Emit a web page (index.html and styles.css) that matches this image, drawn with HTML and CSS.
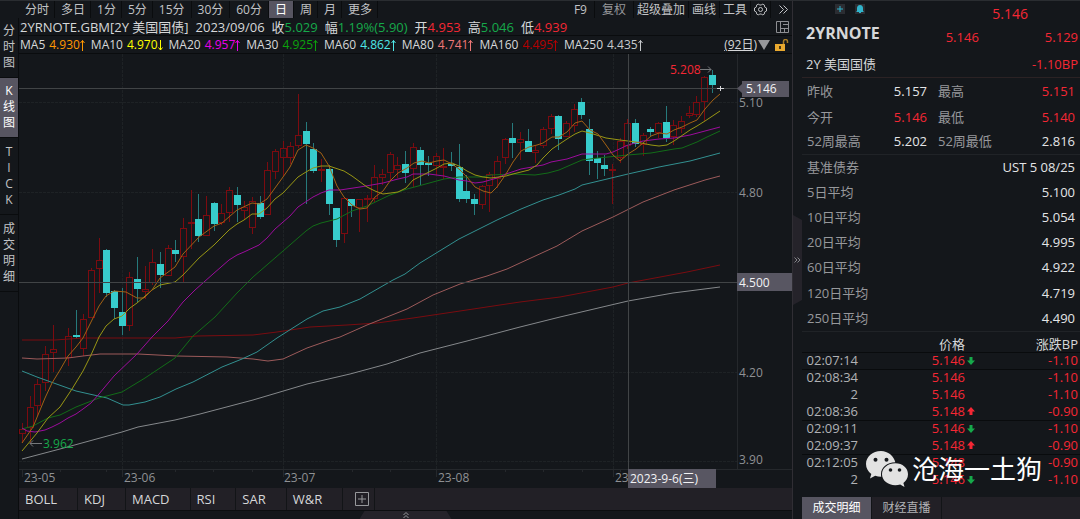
FILE: index.html
```html
<!DOCTYPE html>
<html lang="zh-CN">
<head>
<meta charset="utf-8">
<title>2YRNOTE.GBM</title>
<link rel="stylesheet" href="styles.css">
</head>
<body>
<svg class="defs" aria-hidden="true">
  <symbol id="up" viewBox="0 0 5 12"><path d="M2.5 12V1.5M0.5 4L2.5 1.5L4.5 4" fill="none" stroke="currentColor"/></symbol>
  <symbol id="down" viewBox="0 0 5 12"><path d="M2.5 1V11M0.5 8.500L2.5 11L4.5 8.500" fill="none" stroke="currentColor"/></symbol>
  <symbol id="tick-down" viewBox="0 0 8 8"><path d="M2.500 0H5.500V3.500H8L4 8L0 3.500H2.500Z" fill="currentColor"/></symbol>
  <symbol id="tick-up" viewBox="0 0 8 8"><path d="M2.500 8H5.500V4.500H8L4 0L0 4.500H2.500Z" fill="currentColor"/></symbol>
</svg>
<div class="app">
  <section class="terminal">
    <nav class="toolbar">
      <div class="periods">
        <button>分时</button><button>多日</button><button>1分</button><button>5分</button><button class="wide">15分</button><button class="wide">30分</button><button class="wide">60分</button><button class="wide on">日</button><button>周</button><button>月</button><button>更多</button>
      </div>
      <div class="tools">
        <button class="roomy">F9</button><button class="roomy muted">复权</button><button>超级叠加</button><button>画线</button><button>工具</button>
        <button aria-label="设置"><svg width="13" height="13" viewBox="0 0 13 13" fill="none" stroke="currentColor"><path d="M4.500 1L5.500 2H7.500L8.500 1L10.500 2.200V3.800L12.500 5V8L10.500 9.200V10.800L8.500 12L7.500 11H5.500L4.500 12L2.500 10.800V9.200L0.500 8V5L2.500 3.800V2.200Z"/><circle cx="6.500" cy="6.500" r="2"/></svg></button>
        <button class="more" aria-label="展开"><svg width="9" height="9" viewBox="0 0 9 9" fill="none" stroke="currentColor"><path d="M0.500 0.500L4.500 4.500L0.500 8.500M4.500 0.500L8.500 4.500L4.500 8.500"/></svg></button>
      </div>
    </nav>
    <nav class="views">
      <button><span>分</span><span>时</span><span>图</span></button>
      <button class="on"><span>K</span><span>线</span><span>图</span></button>
      <button class="tall"><span>T</span><span>I</span><span>C</span><span>K</span></button>
      <button class="tall"><span>成</span><span>交</span><span>明</span><span>细</span></button>
    </nav>
    <main class="main">
      <div class="quote">
        <span>2YRNOTE.GBM[2Y 美国国债]</span>
        <span>2023/09/06</span>
        <span>收<b class="green">5.029</b></span>
        <span>幅<b class="green">1.19%(5.90)</b></span>
        <span>开<b class="red">4.953</b></span>
        <span>高<b class="green">5.046</b></span>
        <span>低<b class="red">4.939</b></span>
        <svg class="end" width="13" height="12" viewBox="0 0 13 12" fill="none" stroke="#8d8e92"><path d="M0.500 0.500H12.500V11.500H0.500ZM4.500 0.500V11.500M4.500 7.500H12.500M7 3.500H12.500M8.500 7.500V11.500"/></svg>
      </div>
      <div class="averages">
        <span>MA5 <b class="ma5">4.930<svg><use href="#up"/></svg></b></span>
        <span>MA10 <b class="ma10">4.970<svg><use href="#down"/></svg></b></span>
        <span>MA20 <b class="ma20">4.957<svg><use href="#up"/></svg></b></span>
        <span>MA30 <b class="ma30">4.925<svg><use href="#up"/></svg></b></span>
        <span>MA60 <b class="ma60">4.862<svg><use href="#up"/></svg></b></span>
        <span>MA80 <b class="ma80">4.741<svg><use href="#up"/></svg></b></span>
        <span>MA160 <b class="ma160">4.495<svg><use href="#up"/></svg></b></span>
        <span>MA250 <b class="ma250">4.435<svg><use href="#up"/></svg></b></span>
        <div class="range">
          <a href="#range">(92日)</a>
          <svg width="12" height="10" viewBox="0 0 12 10"><path d="M0 0H12L6 10Z" fill="#97989b"/></svg>
          <svg class="lock" width="14" height="12" viewBox="0 0 14 12"><path d="M8.500 5V2.500A2 2 0 0 1 12.500 2.500V4" fill="none" stroke="#a87c25" stroke-width="1.500"/><rect y="5" width="10" height="7" fill="#e9a92f"/><path d="M4 7H6V10H4Z" fill="#4a3610"/></svg>
        </div>
      </div>
      <svg class="chart" viewBox="19 54 773 434" preserveAspectRatio="xMinYMin meet" role="img" aria-label="日K线图">
        <g class="grid">
          <path d="M19 102.500H737M19 192.500H737M19 372.500H737M19 461.500H737M122.500 54V469M283.500 54V469M436.500 54V469M613.500 54V469"/>
        </g>
        <path class="frame" d="M737.500 54V469M19 469.500H792M22.500 469V477M60.500 469V472M106.500 469V472M175.500 469V472M213.500 469V472M252.500 469V472M313.500 469V472M352.500 469V472M390.500 469V472M467.500 469V472M505.500 469V472M543.500 469V472M582.500 469V472M122.500 469V477M283.500 469V477M436.500 469V477M613.500 469V477M620.500 469V472"/>
        <g id="candles"></g>
        <g id="lines" fill="none"></g>
        <path class="cross" d="M19 88.500H740M19 282.500H737M628.500 54V469"/>
        <path class="last" d="M717 88.500H724M720.500 86V91"/>
        <path class="pointer" d="M30 443.500H42M33 440.500L30 443.500L33 446.500M700 69.500H711M708 66.500L711 69.500L708 72.500"/>
        <text class="green" x="43" y="448">3.962</text>
        <text class="red" x="670" y="74">5.208</text>
        <g class="axis">
          <text x="739" y="107">5.10</text><text x="739" y="197">4.80</text><text x="739" y="377">4.20</text><text x="739" y="464">3.90</text>
          <text x="24" y="482">23-05</text><text x="124" y="482">23-06</text><text x="284" y="482">23-07</text><text x="438" y="482">23-08</text><text x="615" y="482">23</text>
        </g>
        <g class="tag">
          <path d="M737 88.500L742 84V81H789V97H742V93Z"/><rect x="737" y="273" width="55" height="18"/><rect x="628" y="469" width="88" height="19"/>
          <text x="746" y="93">5.146</text><text x="739" y="287">4.500</text><text x="630" y="483">2023-9-6(三)</text>
        </g>
      </svg>
      <nav class="indicators">
        <button>BOLL</button><button>KDJ</button><button>MACD</button><button>RSI</button><button>SAR</button><button>W&amp;R</button>
        <button class="add" aria-label="添加指标"><svg width="14" height="14" viewBox="0 0 14 14" fill="none" stroke="currentColor"><path d="M0.500 0.500H13.500V13.500H0.500ZM7 3V11M3 7H11"/></svg></button>
      </nav>
      <div class="drawer"><button aria-label="展开面板"><svg width="6" height="6" viewBox="0 0 6 6" fill="none" stroke="currentColor"><path d="M0.500 3L3 0.500L5.500 3M0.500 6L3 3.500L5.500 6"/></svg></button></div>
    </main>
  </section>
  <aside class="side">
    <button class="handle" aria-label="收起"><svg width="7" height="6" viewBox="0 0 7 6" fill="none" stroke="currentColor"><path d="M0.500 0.500L3 3L0.500 5.500M3.500 0.500L6 3L3.500 5.500"/></svg></button>
    <div class="panel">
      <header class="head">
        <div class="top">
          <button aria-label="添加自选"><svg width="10" height="10" viewBox="0 0 10 10"><path d="M5 2V8M2 5H8" stroke="#30b4cc"/></svg></button>
          <button aria-label="提醒"><svg width="10" height="10" viewBox="0 0 10 10"><path d="M5 1C7 1 8 2.500 8 4V7L9 8H1L2 7V4C2 2.500 3 1 5 1ZM4 8H6V9H4Z" fill="#30b4cc"/></svg></button>
          <span class="red">5.146</span>
        </div>
        <div class="name"><strong>2YRNOTE</strong><span class="red bid">5.146</span><span class="red">5.129</span></div>
        <div class="name"><span>2Y 美国国债</span><span class="red change">-1.10BP</span></div>
      </header>
      <table class="stats pair">
        <tr><th>昨收</th><td>5.157</td><th>最高</th><td class="red">5.151</td></tr>
        <tr><th>今开</th><td class="red">5.146</td><th>最低</th><td class="red">5.140</td></tr>
        <tr><th>52周最高</th><td>5.202</td><th>52周最低</th><td>2.816</td></tr>
      </table>
      <table class="stats single">
        <tr><th>基准债券</th><td>UST 5 08/25</td></tr>
        <tr><th>5日平均</th><td>5.100</td></tr>
        <tr><th>10日平均</th><td>5.054</td></tr>
        <tr><th>20日平均</th><td>4.995</td></tr>
        <tr><th>60日平均</th><td>4.922</td></tr>
        <tr><th>120日平均</th><td>4.719</td></tr>
        <tr><th>250日平均</th><td>4.490</td></tr>
      </table>
      <div class="deals">
        <table>
          <thead><tr><th></th><th>价格</th><th></th><th>涨跌BP</th></tr></thead>
          <tbody>
            <tr class="rule"><td>02:07:14</td><td>5.146</td><td class="green"><svg><use href="#tick-down"/></svg></td><td>-1.10</td></tr>
            <tr><td>02:08:34</td><td>5.146</td><td></td><td>-1.10</td></tr>
            <tr><td>2</td><td>5.146</td><td></td><td>-1.10</td></tr>
            <tr class="rule"><td>02:08:36</td><td>5.148</td><td class="red"><svg><use href="#tick-up"/></svg></td><td>-0.90</td></tr>
            <tr><td>02:09:11</td><td>5.146</td><td class="green"><svg><use href="#tick-down"/></svg></td><td>-1.10</td></tr>
            <tr class="rule"><td>02:09:37</td><td>5.148</td><td class="red"><svg><use href="#tick-up"/></svg></td><td>-0.90</td></tr>
            <tr><td>02:12:05</td><td>5.148</td><td></td><td>-0.90</td></tr>
            <tr><td>2</td><td>5.146</td><td class="green"><svg><use href="#tick-down"/></svg></td><td>-1.10</td></tr>
          </tbody>
        </table>
        <div class="mark">
          <svg width="42" height="36" viewBox="0 0 42 36"><path fill="#e2e2e2" d="M15 0C6.500 0 0 5.800 0 13C0 17 2 20.500 5.300 23L4 27.500L9.200 24.800C11 25.400 13 25.700 15.200 25.700A11 10 0 0 1 15 23C15 16.500 21 11.300 29.300 11.300C28 5 22 0 15 0Z"/><path fill="#e2e2e2" d="M29.300 12.300C22 12.300 16 17 16 23.300C16 29.500 22 34.200 29.300 34.200C31 34.200 32.700 34 34.200 33.500L38.500 36L37.400 32C40 30 42 27 42 23.300C42 17 36.500 12.300 29.300 12.300Z"/><g fill="#14171b"><circle cx="9.500" cy="8.800" r="2"/><circle cx="20.500" cy="8.800" r="2"/><circle cx="24.500" cy="19" r="1.800"/><circle cx="33.500" cy="19" r="1.800"/></g></svg>
          <span>沧海一土狗</span>
        </div>
      </div>
      <nav class="tabs"><button class="on">成交明细</button><button>财经直播</button></nav>
    </div>
  </aside>
</div>
<script src="chart.js"></script>
</body>
</html>
```
FILE: styles.css
```css
* { box-sizing: border-box; }
body {
  margin: 0;
  background: #14171b;
  color: #d6d7d9;
  font: 12px/16px "Open Sans", "Noto Sans CJK SC", sans-serif;
  overflow: hidden;
}
button {
  margin: 0;
  padding: 0;
  border: 0;
  background: none;
  color: inherit;
  font: inherit;
  white-space: nowrap;
}
svg { display: block; }
b { font-weight: 400; }
.defs { position: absolute; width: 0; height: 0; }

.red { color: #f52734; fill: #f52734; }
.green { color: #16a94a; fill: #16a94a; }

.app {
  display: grid;
  grid-template-columns: minmax(0, 1fr) 287px;
  height: 100vh;
  border-top: 1px solid #2a2d31;
}
.terminal {
  display: grid;
  grid-template: 17px minmax(0, 1fr) / 19px minmax(0, 1fr);
  border-right: 1px solid #302e34;
}

.toolbar {
  grid-column: 1 / 3;
  display: flex;
  justify-content: space-between;
  padding-left: 19px;
  color: #c2c3c6;
}
.periods, .tools { display: flex; }
.toolbar button {
  padding: 0 5px 0 6px;
  line-height: 17px;
  border-right: 1px solid #0a0c0e;
}
.toolbar .wide { padding: 0 6px; }
.toolbar .on { background: #575561; color: #fff; }
.toolbar .tools button { padding: 0 3px; }
.toolbar .tools .roomy { padding: 0 7px; }
.toolbar .tools .more { padding: 0 4px 0 8px; border: 0; }
.toolbar .muted { color: #97989b; }

.views { border-right: 1px solid #0a0c0e; color: #c2c3c6; padding-top: 4px; }
.views button {
  display: flex;
  flex-direction: column;
  align-items: center;
  width: 100%;
  padding: 1px 0 6px;
  border-bottom: 1px solid #0a0c0e;
}
.views .on { padding: 5px 0 6px; background: #575561; color: #fff; }
.views .tall { padding: 6px 0; }

.main { display: flex; flex-direction: column; min-width: 0; }
.quote, .averages {
  display: flex;
  align-items: center;
  height: 18px;
  padding: 0 3px 0 1px;
  border-bottom: 1px solid #0a0c0e;
  white-space: nowrap;
}
.quote { gap: 7px; font-size: 13px; }
.end { margin-left: auto; }
.averages { gap: 6px; }
.averages span { display: flex; gap: 4px; }
.averages b { display: flex; align-items: center; }
.averages b svg { width: 5px; height: 12px; }
.ma5 { color: #ff9800; }
.ma10 { color: #ffff00; }
.ma20 { color: #ea00ea; }
.ma30 { color: #0ba30b; }
.ma60 { color: #4fe8e8; }
.ma80 { color: #f07878; }
.ma160 { color: #b50000; }
.ma250 { color: #c6c9cc; }
.range { display: flex; align-items: center; gap: 1px; margin-left: auto; }
.range a { color: inherit; }
.lock { margin-left: 4px; }

.chart { flex: 1; width: 100%; min-height: 0; }
.chart text { font-size: 12px; }
.chart path { stroke-width: 1; }
.grid path { stroke: #1e2225; stroke-dasharray: 3 1; }
.frame { stroke: #25282c; fill: none; }
.cross { stroke: #414446; }
.last { stroke: #d6d7d9; }
.pointer { stroke: #75787b; fill: none; }
.axis text { fill: #8f9194; }
.tag path, .tag rect { fill: #585662; }
.tag text { fill: #f2f2f4; }

.indicators { display: flex; height: 22px; background: #222026; }
.indicators button { padding: 0 20px 0 6px; border-right: 1px solid #121417; font-size: 13px; }
.indicators .add { padding: 0 5px 0 12px; color: #97989b; }
.drawer { display: flex; justify-content: center; height: 9px; border-top: 1px solid #0c0e10; }
.drawer button {
  display: flex;
  justify-content: center;
  align-items: center;
  width: 92px;
  background: #25232a;
  color: #97989b;
  clip-path: polygon(5px 0, 87px 0, 100% 100%, 0 100%);
}

.side { display: grid; grid-template-columns: 9px minmax(0, 1fr); font-size: 13px; }
.handle {
  align-self: center;
  display: flex;
  justify-content: center;
  align-items: center;
  height: 90px;
  background: #25232a;
  color: #85868a;
  clip-path: polygon(0 0, 100% 5px, 100% 85px, 0 100%);
}
.panel { display: flex; flex-direction: column; min-width: 0; }
.head { height: 77px; padding: 1px 2px 0 4px; border-bottom: 1px solid #2b2224; }
.top { display: flex; align-items: flex-start; gap: 10px; padding-left: 29px; height: 21px; }
.top button { margin-top: 2px; background: #2b2d32; }
.top .red { margin: 3px 50px 0 auto; font-size: 14px; line-height: 18px; }
.name { display: flex; align-items: center; height: 28px; }
.name strong { flex: 1; padding-bottom: 8px; font-size: 16px; }
.name .bid { margin-right: 66px; }
.change { margin-left: auto; }
.name:last-child { height: 26px; }

table { border-collapse: collapse; width: 100%; }
th, td { padding: 0; font-weight: 400; white-space: nowrap; }
.stats { border-bottom: 1px solid #202327; }
.stats tr { height: 25px; }
.pair tr:first-child, .single tr:nth-child(n+6) { height: 26px; }
.stats th { padding-left: 5px; color: #97989b; text-align: left; font-size: 13px; }
.stats td { padding-right: 5px; text-align: right; color: #e4e5e7; }
.pair th:first-child { width: 72px; }
.pair td:nth-child(2) { width: 53px; padding: 0; }
.pair th:nth-child(3) { padding-left: 11px; }
.stats td.red { color: #f52734; }

.deals { position: relative; flex: 1; }
.deals thead tr { height: 20px; }
.deals thead th { vertical-align: bottom; }
.deals tbody tr { height: 17px; }
.deals th, .deals td { text-align: right; line-height: 15px; }
.deals td { color: #f52734; }
.deals td:first-child { color: #b1b2b5; }
.deals th:nth-child(1) { width: 56px; }
.deals th:nth-child(2) { width: 107px; }
.deals th:nth-child(3) { width: 13px; }
.deals th:last-child, .deals td:last-child { padding-right: 2px; }
.deals .rule, .deals thead tr { border-bottom: 1px solid #090b0d; }
.deals td.green { color: #16a94a; }
.deals td svg { width: 8px; height: 8px; margin-left: 2px; }
.mark {
  position: absolute;
  left: 64px;
  bottom: 8px;
  display: flex;
  align-items: center;
  gap: 4px;
  color: #fff;
  font-size: 26px;
  line-height: 40px;
  white-space: nowrap;
}
.tabs { display: flex; height: 22px; background: #222026; }
.tabs button { width: 70px; font-size: 12px; border-right: 1px solid #121417; color: #b1b2b5; }
.tabs .on { background: #575561; color: #fff; }
```
FILE: chart.js
```js
// One row per session: direction (r = up, t = down), high, body top, body bottom, low.
const candles = `
r 423 429 434 443|r 396 407 428 443|r 379 384 406 416|r 346 354 383 391|r 325 349 353 372||r 328 336 358 366|t 310 335 336 339|r 314 319 349 356|r 268 270 318 318
r 238 260 269 293|t 249 250 293 297|t 290 291 308 319|t 288 312 326 335|r 272 277 326 331|t 257 279 289 302|r 266 289 292 299|r 249 262 283 285|t 252 264 275 288|r 245 248 276 276
t 240 250 254 262|r 218 228 257 282|r 190 222 224 249|t 194 219 236 242|r 196 215 236 236|t 202 203 224 231|r 204 213 223 225|r 187 190 213 222|t 187 195 205 222|r 201 207 211 220
r 197 201 228 234|t 196 203 217 219|r 162 170 215 215|r 149 151 172 179|r 141 148 158 176|r 142 146 158 164|r 94 135 146 148|t 122 131 144 204|t 143 149 171 173|r 159 169 170 182
t 165 169 204 215|t 208 208 240 247|r 198 198 234 243|t 199 199 206 217|r 199 199 208 232|r 195 198 199 222|r 165 177 199 202|r 169 174 178 185|r 152 154 173 180|r 157 165 170 178
t 151 164 173 183|r 143 147 169 187|t 147 150 165 185|t 156 163 165 176|r 153 156 166 175|r 148 166 168 179|t 152 164 166 171|t 144 167 199 202|t 175 191 199 203|t 194 199 204 215
r 185 186 205 209|r 172 174 186 212|r 156 161 179 188|r 138 139 158 164|t 123 138 143 158|r 132 139 143 160|t 129 141 152 152|r 146 150 153 163|r 127 129 146 148|r 114 116 129 134
t 115 116 139 150|r 121 123 137 137|r 104 109 126 132|t 98 102 115 119|t 119 129 161 175|t 151 158 163 179|t 155 165 169 176|r 164 169 171 204|r 138 141 158 163|r 119 123 146 149
t 119 123 144 147|r 133 135 145 156|t 127 129 132 136|r 122 123 133 138|t 106 122 138 142|r 120 125 137 145|r 116 121 129 133|r 106 113 116 118|r 96 102 115 117|r 76 77 102 121
t 70 75 85 93`.trim().split(/[|\n]/);

const lines = [
  ['#7a0c10', '22,340 55,340 83,338 175,338 197,336 253,335 277,332 310,327 347,325 377,323 413,318 460,311 520,302 560,297 613,287 628,283 687,272 720,265'],
  ['#85888b', '22,459 60,449 122,432 138,427 175,420 200,414 253,400 307,384 350,374 387,364 420,353 467,341 520,327 560,317 628,301 673,293 720,287'],
  ['#9c5a5a', '22,358 37,359 68,358 83,356 100,354 138,354 177,356 227,357 253,359 268,361 283,359 307,348 327,341 340,337 367,325 387,317 407,309 433,295 460,284 487,276 507,269 520,263 557,246 582,231 613,217 643,202 674,190 705,180 720,176'],
  ['#329090', '22,371 37,377 76,391 107,398 123,405 129,405 145,402 160,397 176,389 193,382 222,367 242,359 257,352 277,338 307,319 323,311 340,307 360,299 393,280 405,274 420,263 459,239 497,220 521,209 543,200 559,195 575,189 582,185 628,174 659,167 690,161 720,153'],
  ['#126c18', '22,429 33,426 48,418 60,415 76,407 99,398 122,392 145,378 175,358 193,336 215,317 237,293 253,277 283,251 306,231 313,226 321,223 337,219 352,211 367,206 390,195 407,189 422,185 444,179 459,177 482,177 491,175 513,174 535,175 548,173 559,170 582,160 598,158 628,155 651,153 674,149 682,148 697,142 707,137 720,131'],
  ['#9c0c9c', '22,428 27,431 35,432 45,430 52,427 60,423 68,418 76,414 83,409 91,403 99,394 114,376 137,354 152,337 168,321 183,302 195,290 213,274 229,260 237,255 244,252 259,245 267,238 275,229 290,216 298,207 313,197 321,193 329,190 340,190 360,187 383,183 398,179 407,177 413,174 429,174 444,176 459,180 467,181 475,183 483,182 497,178 506,174 521,169 543,165 551,162 567,159 582,154 606,154 613,152 628,145 643,141 659,139 674,138 690,135 705,131 720,127'],
  ['#989614', '22,451 37,433 48,418 60,407 72,389 83,371 91,355 99,337 106,326 114,319 122,316 130,308 137,303 144,297 152,290 160,285 175,282 183,275 199,258 214,245 229,230 237,224 244,220 252,214 259,214 267,208 275,199 283,193 298,177 306,172 313,168 321,166 329,166 344,171 352,176 367,187 375,191 383,194 398,192 406,188 413,180 429,172 437,168 444,164 452,163 459,166 467,171 475,175 483,177 491,178 506,176 513,174 529,170 537,165 543,158 552,149 567,139 575,134 582,131 590,133 606,138 620,140 636,142 651,145 659,146 667,145 674,141 690,130 697,126 705,121 720,111'],
  ['#a36114', '22,443 33,427 45,398 52,383 60,370 68,356 76,347 83,338 91,322 99,306 106,296 114,291 126,292 137,298 144,298 152,290 160,278 175,267 183,254 199,237 214,226 222,223 237,210 252,203 259,204 267,199 283,177 290,167 298,150 306,145 313,148 321,153 329,166 337,186 344,197 352,205 360,209 367,208 375,197 383,191 390,181 398,173 407,168 414,163 422,161 429,163 437,161 444,160 452,164 459,169 467,177 475,187 483,191 491,193 497,187 506,174 513,162 521,151 529,147 537,145 543,143 552,137 559,137 567,132 575,123 582,121 590,130 598,134 606,145 613,155 620,161 628,154 636,149 643,143 651,136 659,133 667,134 674,130 682,127 690,123 697,120 705,109 713,100 720,94']
];

function add(parent, tag, attrs) {
  const node = document.createElementNS('http://www.w3.org/2000/svg', tag);
  for (const key in attrs) node.setAttribute(key, attrs[key]);
  parent.append(node);
}

const candleLayer = document.getElementById('candles');
candles.forEach((row, i) => {
  if (!row) return;
  const [type, ...values] = row.split(' ');
  const [high, top, bottom, low] = values.map(Number);
  const x = Math.floor(22.4 + i * 7.665) + 0.5;
  const up = type === 'r';
  add(candleLayer, 'path', {
    d: `M${x} ${high}V${top}M${x} ${bottom}V${low}`,
    stroke: up ? '#7c0b10' : '#267a7c'
  });
  add(candleLayer, 'rect', {
    x: x - 3, y: top + 0.5, width: 6, height: Math.max(bottom - top - 1, 1),
    fill: up ? 'none' : '#37cccc', stroke: up ? '#7c0b10' : '#37cccc'
  });
});

const lineLayer = document.getElementById('lines');
lines.forEach(([color, points]) => add(lineLayer, 'polyline', { points, stroke: color }));
```
